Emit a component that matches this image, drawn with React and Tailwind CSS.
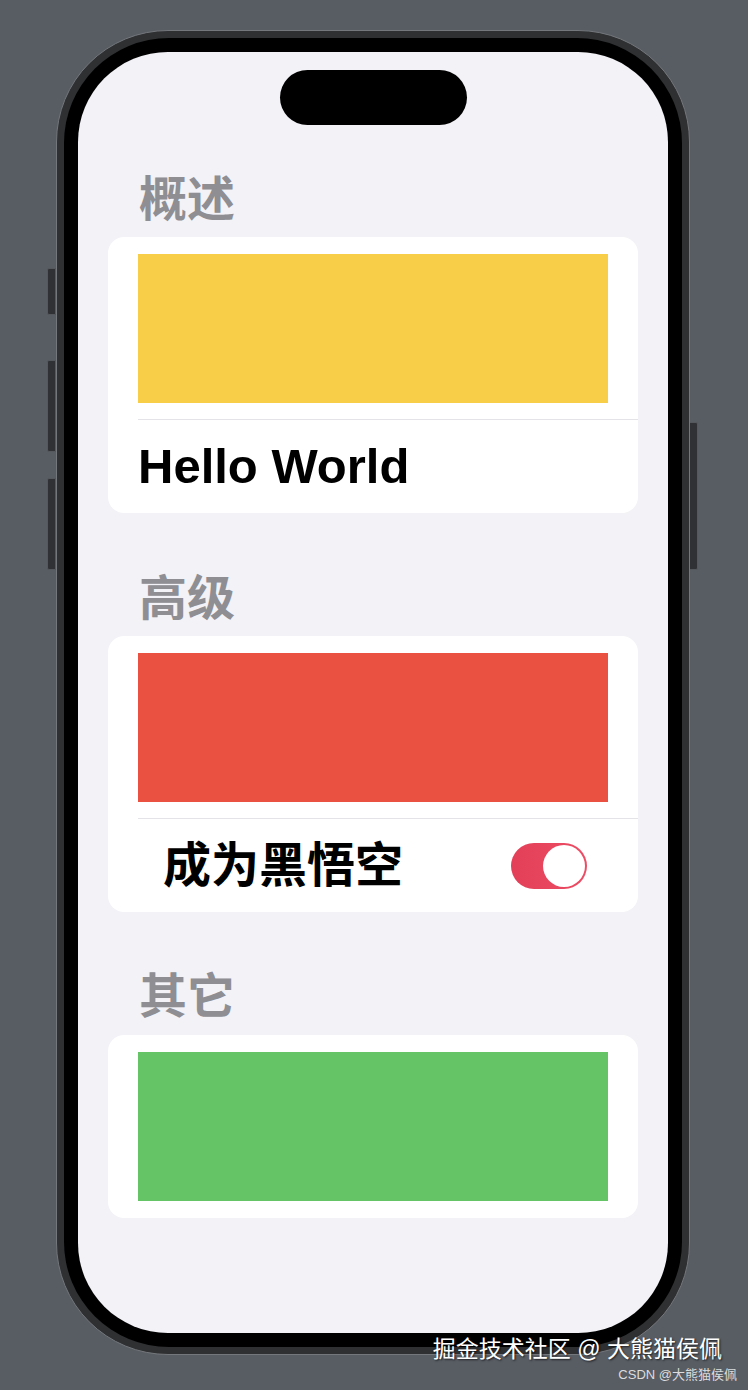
import React from 'react';

const cjk = { fontFamily: '"Liberation Sans", "Noto Sans CJK SC", sans-serif' };

function Header({ children, className = '' }) {
  return (
    <div className={`pl-[31px] h-[48px] text-[48px] leading-[48px] font-bold text-[#8e8e93] ${className}`}>
      {children}
    </div>
  );
}

function Swatch({ color }) {
  return <div className={`ml-[30px] mr-[30px] h-[149px] ${color}`} />;
}

function Toggle() {
  return (
    <div className="w-[76px] h-[46px] rounded-full bg-gradient-to-r from-[#e33f58] to-[#ec4d64] flex items-center justify-end pr-[2px]">
      <div className="w-[42px] h-[42px] rounded-full bg-white" />
    </div>
  );
}

export default function App() {
  return (
    <div className="relative w-[748px] h-[1390px] bg-[#585d64] pt-[30px] pl-[56px] overflow-hidden" style={cjk}>
      {/* side buttons */}
      <div className="absolute left-[47px] top-[268px] w-[9px] h-[47px] rounded-l-[2px] bg-[#2f3134] border border-[#55585c]" />
      <div className="absolute left-[47px] top-[360px] w-[9px] h-[92px] rounded-l-[2px] bg-[#2f3134] border border-[#55585c]" />
      <div className="absolute left-[47px] top-[478px] w-[9px] h-[92px] rounded-l-[2px] bg-[#2f3134] border border-[#55585c]" />
      <div className="absolute left-[689px] top-[422px] w-[9px] h-[148px] rounded-r-[2px] bg-[#2f3134] border border-[#55585c]" />

      <div className="relative w-[634px] h-[1325px] rounded-[112px] bg-[#2e3032] border border-[#74777b] p-[7px]">
        <div className="h-full rounded-[105px] bg-black p-[14px]">
          <div className="h-full rounded-[90px] bg-[#f2f2f7] overflow-hidden flex flex-col">
            <div className="mx-auto mt-[18px] w-[187px] h-[55px] rounded-full bg-black" />

            <div className="px-[30px] flex flex-col">
              <Header className="mt-[51px]">概述</Header>
              <div className="mt-[13px] bg-white rounded-[16px] pt-[17px] flex flex-col">
                <Swatch color="bg-[#f8ce48]" />
                <div className="ml-[30px] mt-[16px] border-t border-[#e3e3e8] h-[94px] flex items-center">
                  <span className="text-[49px] leading-none font-bold text-black" style={{ fontFamily: '"Liberation Sans", Arial, sans-serif' }}>
                    Hello World
                  </span>
                </div>
              </div>

              <Header className="mt-[62px]">高级</Header>
              <div className="mt-[13px] bg-white rounded-[16px] pt-[17px] flex flex-col">
                <Swatch color="bg-[#eb5140]" />
                <div className="ml-[30px] mt-[16px] border-t border-[#e3e3e8] h-[94px] flex items-center justify-between pl-[25px] pr-[51px]">
                  <span className="text-[48px] leading-none font-bold text-black">成为黑悟空</span>
                  <Toggle />
                </div>
              </div>

              <Header className="mt-[61px]">其它</Header>
              <div className="mt-[14px] bg-white rounded-[16px] pt-[17px] pb-[17px] flex flex-col">
                <Swatch color="bg-[#65c466]" />
              </div>
            </div>
          </div>
        </div>
      </div>

      {/* watermark */}
      <div className="absolute right-[26px] top-[1334px] text-[23px] leading-[30px] text-white [text-shadow:1px_1px_2px_rgba(0,0,0,0.7)] whitespace-nowrap">
        掘金技术社区 @ 大熊猫侯佩
      </div>
      <div className="absolute right-[11px] top-[1366px] text-[13px] leading-[18px] text-[#dcdcdc] whitespace-nowrap">
        CSDN @大熊猫侯佩
      </div>
    </div>
  );
}
